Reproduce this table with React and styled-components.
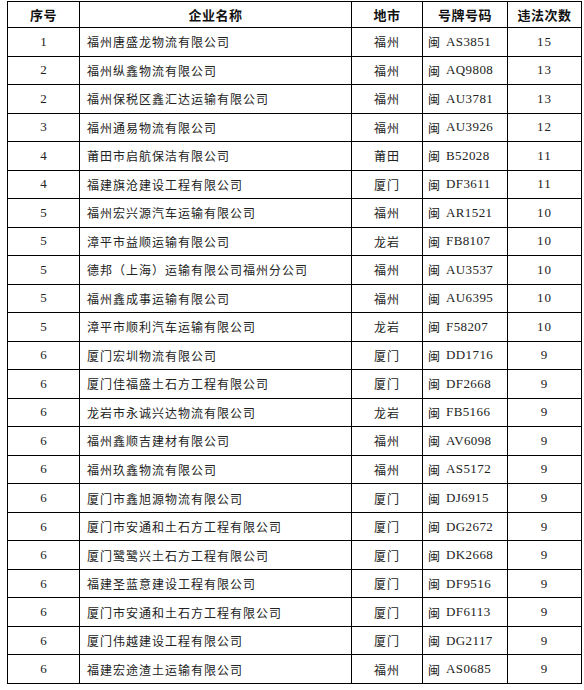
import React from "react";
import styled, { createGlobalStyle } from "styled-components";

const Global = createGlobalStyle`
  html, body { margin: 0; padding: 0; background: #fff; }
  body { font-family: "Noto Sans CJK SC", "Liberation Sans", sans-serif; color: #1a1a1a; }
`;

const Page = styled.div`
  padding: 1px 0 0 7px;
`;

const Grid = styled.div`
  display: grid;
  width: 575px;
  box-sizing: border-box;
  grid-template-columns: 72px 272px 71px 85px 74px;
  grid-template-rows: 26px repeat(23, 28.52px);
  border-top: 1px solid #000;
  border-left: 1px solid #000;
`;

const Cell = styled.div`
  box-sizing: border-box;
  border-right: 1px solid #000;
  border-bottom: 1px solid #000;
  display: flex;
  align-items: center;
  justify-content: ${(p) => (p.$align === "left" ? "flex-start" : "center")};
  padding-left: ${(p) => (p.$align === "left" ? p.$pad || 7 : 0)}px;
  white-space: nowrap;
  overflow: hidden;
`;

const Head = styled(Cell)`
  font-family: "Noto Sans CJK SC", sans-serif;
  font-weight: 700;
  font-size: 13px;
  letter-spacing: 0.5px;
  color: #111;
`;

const Num = styled.span`
  font-family: "Liberation Serif", serif;
  font-size: 13px;
  color: #222;
  letter-spacing: ${(p) => p.$ls || 0}px;
`;

const Zh = styled.span`
  font-family: "Noto Sans CJK SC", sans-serif;
  font-size: 12px;
  letter-spacing: 1px;
  color: #222;
`;

const Plate = styled.span`
  display: inline-flex;
  align-items: center;
  gap: 5px;
`;

const rows = [
  ["1", "福州唐盛龙物流有限公司", "福州", "AS3851", "15"],
  ["2", "福州纵鑫物流有限公司", "福州", "AQ9808", "13"],
  ["2", "福州保税区鑫汇达运输有限公司", "福州", "AU3781", "13"],
  ["3", "福州通易物流有限公司", "福州", "AU3926", "12"],
  ["4", "莆田市启航保洁有限公司", "莆田", "B52028", "11"],
  ["4", "福建旗沧建设工程有限公司", "厦门", "DF3611", "11"],
  ["5", "福州宏兴源汽车运输有限公司", "福州", "AR1521", "10"],
  ["5", "漳平市益顺运输有限公司", "龙岩", "FB8107", "10"],
  ["5", "德邦（上海）运输有限公司福州分公司", "福州", "AU3537", "10"],
  ["5", "福州鑫成事运输有限公司", "福州", "AU6395", "10"],
  ["5", "漳平市顺利汽车运输有限公司", "龙岩", "F58207", "10"],
  ["6", "厦门宏圳物流有限公司", "厦门", "DD1716", "9"],
  ["6", "厦门佳福盛土石方工程有限公司", "厦门", "DF2668", "9"],
  ["6", "龙岩市永诚兴达物流有限公司", "龙岩", "FB5166", "9"],
  ["6", "福州鑫顺吉建材有限公司", "福州", "AV6098", "9"],
  ["6", "福州玖鑫物流有限公司", "福州", "AS5172", "9"],
  ["6", "厦门市鑫旭源物流有限公司", "厦门", "DJ6915", "9"],
  ["6", "厦门市安通和土石方工程有限公司", "厦门", "DG2672", "9"],
  ["6", "厦门鹭鹭兴土石方工程有限公司", "厦门", "DK2668", "9"],
  ["6", "福建圣蓝意建设工程有限公司", "厦门", "DF9516", "9"],
  ["6", "厦门市安通和土石方工程有限公司", "厦门", "DF6113", "9"],
  ["6", "厦门伟越建设工程有限公司", "厦门", "DG2117", "9"],
  ["6", "福建宏途渣土运输有限公司", "福州", "AS0685", "9"],
];

export default function App() {
  return (
    <>
      <Global />
      <Page>
        <Grid>
          <Head>序号</Head>
          <Head>企业名称</Head>
          <Head>地市</Head>
          <Head>号牌号码</Head>
          <Head>违法次数</Head>
          {rows.map((r, i) => (
            <React.Fragment key={i}>
              <Cell><Num>{r[0]}</Num></Cell>
              <Cell $align="left" $pad={7}><Zh>{r[1]}</Zh></Cell>
              <Cell><Zh>{r[2]}</Zh></Cell>
              <Cell $align="left" $pad={5}>
                <Plate><Zh>闽</Zh><Num $ls={0.4}>{r[3]}</Num></Plate>
              </Cell>
              <Cell><Num $ls={1}>{r[4]}</Num></Cell>
            </React.Fragment>
          ))}
        </Grid>
      </Page>
    </>
  );
}
